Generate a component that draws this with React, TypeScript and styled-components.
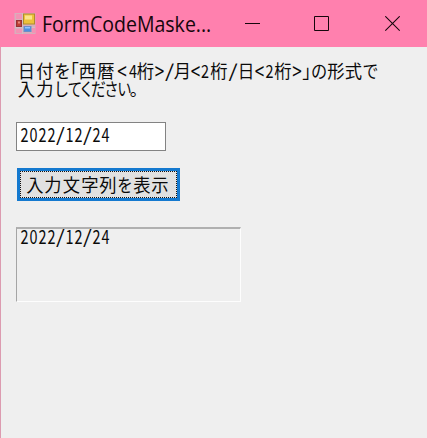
import React from "react";
import styled, { createGlobalStyle } from "styled-components";

const GlobalStyle = createGlobalStyle`
  * { box-sizing: border-box; }
  body { margin: 0; overflow: hidden; background: #efefef; }
`;

const Window = styled.div`
  width: 427px;
  height: 438px;
  border-left: 1px solid #dc9bb0;
  background: #efefef;
  color: #0a0a0a;
  font-family: "Noto Sans CJK JP", sans-serif;
`;

const TitleBar = styled.header`
  display: flex;
  align-items: center;
  height: 47px;
  margin-left: -1px;
  padding-left: 14px;
  background: #ff80ae;
`;

const Title = styled.h1`
  width: 188px;
  margin: 1px 0 0 6px;
  font: 400 21.2px/30px "Open Sans", sans-serif;
  color: #16060c;
  white-space: nowrap;
`;

const TitleText = styled.span`
  display: inline-block;
  transform: scaleX(0.922);
  transform-origin: left center;
`;

const Controls = styled.div`
  display: flex;
  gap: 54px;
  margin-left: 15px;
`;

const Control = styled.button`
  display: flex;
  width: 15px;
  height: 16px;
  padding: 0;
  border: 0;
  background: none;
  & + & + & { margin-left: 2px; }
`;

const Form = styled.main`
  display: flex;
  flex-direction: column;
  align-items: flex-start;
  padding: 14px 0 0 15px;
`;

const Prompt = styled.div`
  padding-left: 1px;
  height: 36px;
`;

const Line = styled.div`
  display: flex;
  height: 18px;
  line-height: 18px;
  font-size: 18px;
`;

const Cell = styled.span<{ $w: number; $sx: number; $sy: number }>`
  display: flex;
  justify-content: center;
  flex: none;
  width: ${(p) => p.$w}px;
  white-space: nowrap;
  transform: scale(${(p) => p.$sx}, ${(p) => p.$sy});
`;

const Field = styled.div`
  width: 150px;
  height: 29px;
  margin-top: 25px;
  padding: 2px 0 0 3px;
  border: 1px solid #838383;
  background: #fff;
`;

const SubmitButton = styled.button`
  width: 163px;
  height: 33px;
  margin: 17px 0 0 1px;
  padding: 0 0 2px 6px;
  border: 3px solid #1479cf;
  background: #e1e1e1;
  outline: 1px dotted #111;
  outline-offset: -4px;
  color: #0a0a0a;
  font-family: inherit;
`;

const Output = styled.div`
  width: 225px;
  height: 75px;
  margin-top: 26px;
  padding: 0 0 0 3px;
  border: 1px solid;
  border-width: 2px 1px 1px 1px;
  border-color: #b0b0b0 #fdfdfd #fdfdfd #a5a5a5;
  & > div { margin-top: -2px; }
`;

type Glyph = [string, number, number?, number?];

const promptLines: Glyph[][] = [
  [
    ["日", 19], ["付", 18], ["を", 17, 0.92], ["｢", 7], ["西", 19], ["暦", 18],
    ["<", 14, 0.95, 1.3], ["4", 8, 0.8], ["桁", 17], [">", 11, 0.95, 1.3], ["/", 9, 1.3],
    ["月", 17], ["<", 9, 0.95, 1.3], ["2", 10, 0.8], ["桁", 18], ["/", 10, 1.3],
    ["日", 16, 0.92], ["<", 11, 0.95, 1.3], ["2", 9, 0.8], ["桁", 18], [">", 10, 0.95, 1.3],
    ["｣", 9], ["の", 16, 0.9], ["形", 18], ["式", 17], ["で", 17, 0.88],
  ],
  [
    ["入", 19], ["力", 18], ["し", 15, 0.85], ["て", 12, 0.82], ["く", 11, 0.85],
    ["だ", 13, 0.82], ["さ", 13, 0.8], ["い", 13, 0.8], ["。", 15],
  ],
];

const dateGlyphs: Glyph[] = Array.from("2022/12/24").map(
  (c): Glyph => [c, 9, c === "/" ? 1.25 : 0.8, 1.03]
);

const buttonGlyphs: Glyph[] = [
  ["入", 18], ["力", 18], ["文", 19], ["字", 18],
  ["列", 18], ["を", 16, 0.86], ["表", 18], ["示", 18],
];

const GlyphLine = ({ glyphs }: { glyphs: Glyph[] }) => (
  <Line>
    {glyphs.map(([char, w, sx = 0.96, sy = 1], i) => (
      <Cell key={i} $w={w} $sx={sx} $sy={sy}>{char}</Cell>
    ))}
  </Line>
);

const AppIcon = () => (
  <svg width="22" height="23" viewBox="0 0 22 23">
    <rect x="0.5" y="1" width="21" height="21" fill="#d8aebb" />
    <path d="M2 2h6v5H2zM2 17h6v4H2zM18 16h3v5h-3z" fill="#f293b4" />
    <path d="M8.5 1v21M1 15.5h20" stroke="#d3bdc4" />
    <rect x="9.5" y="2" width="11" height="10" fill="#edc13a" stroke="#b08b2c" />
    <path d="M11 3.5h7v4h-7z" fill="#fbe48a" />
    <rect x="2.5" y="8.5" width="5" height="6" fill="#bd3f35" stroke="#963235" />
    <path d="M4 9.5h2v2H4z" fill="#e58a7c" />
    <rect x="10" y="14.5" width="7" height="5" fill="#4d8ee0" stroke="#6c8fc6" />
    <path d="M11 15h5v1.5h-5z" fill="#91c4ff" />
  </svg>
);

export default function App() {
  return (
    <>
      <GlobalStyle />
      <Window>
        <TitleBar>
          <AppIcon />
          <Title><TitleText>FormCodeMaske...</TitleText></Title>
          <Controls>
            <Control aria-label="Minimize">
              <svg width="15" height="16"><path d="M0 7.5h15" stroke="#16060c" /></svg>
            </Control>
            <Control aria-label="Maximize">
              <svg width="15" height="16"><path d="M.5.5h14v14H.5z" fill="none" stroke="#16060c" /></svg>
            </Control>
            <Control aria-label="Close">
              <svg width="15" height="16"><path d="M.3.3l14.4 14.4M14.7.3L.3 14.7" stroke="#16060c" strokeWidth="1.1" /></svg>
            </Control>
          </Controls>
        </TitleBar>
        <Form>
          <Prompt>
            {promptLines.map((line, i) => <GlyphLine key={i} glyphs={line} />)}
          </Prompt>
          <Field><GlyphLine glyphs={dateGlyphs} /></Field>
          <SubmitButton><GlyphLine glyphs={buttonGlyphs} /></SubmitButton>
          <Output><GlyphLine glyphs={dateGlyphs} /></Output>
        </Form>
      </Window>
    </>
  );
}
